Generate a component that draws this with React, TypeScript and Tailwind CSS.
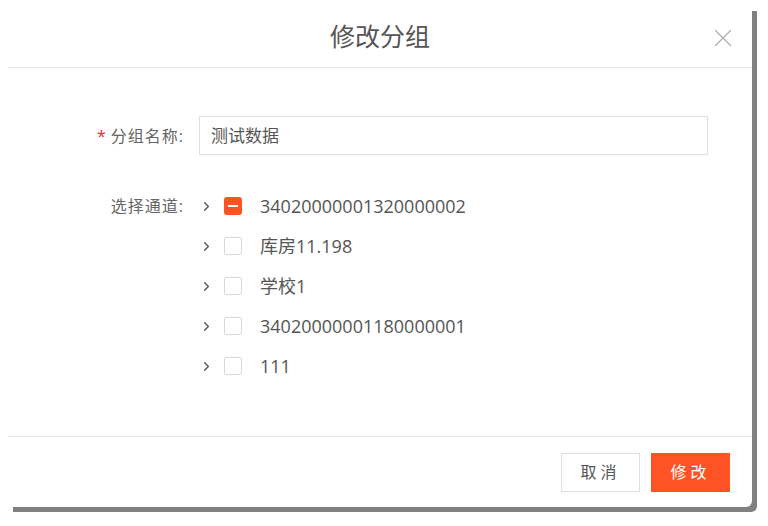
import { ChevronRight, X } from 'lucide-react';

const channels = [
  { name: '34020000001320000002', state: 'partial' },
  { name: '库房11.198', state: 'none' },
  { name: '学校1', state: 'none' },
  { name: '34020000001180000001', state: 'none' },
  { name: '111', state: 'none' },
];

const font = { fontFamily: '"Open Sans", "Noto Sans CJK SC", sans-serif' };

export default function App() {
  return (
    <div className="h-[526px] w-[768px] overflow-hidden bg-white pt-[6px] pl-2" style={font}>
      <div className="flex h-[501px] w-[744px] flex-col rounded-br-[6px] bg-white shadow-[5px_5px_0_0_#808080]">
        {/* header */}
        <div className="relative flex h-[62px] shrink-0 items-center justify-center border-b border-[#e8e8e8]">
          <h1 className="text-[25px] font-normal text-[#555]">修改分组</h1>
          <X className="absolute top-[17px] right-[14px] h-[30px] w-[30px] text-[#b0b0b0]" strokeWidth={1} />
        </div>

        {/* body */}
        <div className="flex-1 pt-[48px]">
          <div className="flex items-center">
            <label className="w-[191px] pr-[15px] text-right text-[16px] tracking-[1px] text-[#666]">
              <span className="mr-1 text-[#f5222d]">*</span>分组名称:
            </label>
            <div className="flex h-[39px] w-[509px] items-center border border-[#dcdfe6] px-[11px] text-[17px] text-[#555]">
              测试数据
            </div>
          </div>

          <div className="mt-[31px] flex items-start">
            <label className="flex h-[40px] w-[191px] items-center justify-end pr-[15px] text-[16px] tracking-[1px] text-[#666]">
              选择通道:
            </label>
            <ul className="flex flex-col">
              {channels.map((c) => (
                <li key={c.name} className="flex h-[40px] items-center">
                  <ChevronRight className="h-[15px] w-[15px] text-[#555]" strokeWidth={2.2} />
                  {c.state === 'partial' ? (
                    <span className="ml-[10px] flex h-[18px] w-[18px] items-center justify-center rounded-[3px] bg-[#ff5325]">
                      <span className="h-[2px] w-[10px] bg-white" />
                    </span>
                  ) : (
                    <span className="ml-[10px] h-[18px] w-[18px] rounded-[2px] border border-[#d9d9d9] bg-white" />
                  )}
                  <span className="ml-[18px] text-[18px] text-[#555]">{c.name}</span>
                </li>
              ))}
            </ul>
          </div>
        </div>

        {/* footer */}
        <div className="flex h-[71px] shrink-0 items-center justify-end gap-[11px] border-t border-[#e8e8e8] pr-[22px]">
          <button className="h-[39px] w-[79px] border border-[#dcdfe6] bg-white text-[16px] tracking-[4px] text-[#555]">
            取消
          </button>
          <button className="h-[39px] w-[79px] bg-[#ff5325] text-[16px] tracking-[4px] text-white">修改</button>
        </div>
      </div>
    </div>
  );
}
